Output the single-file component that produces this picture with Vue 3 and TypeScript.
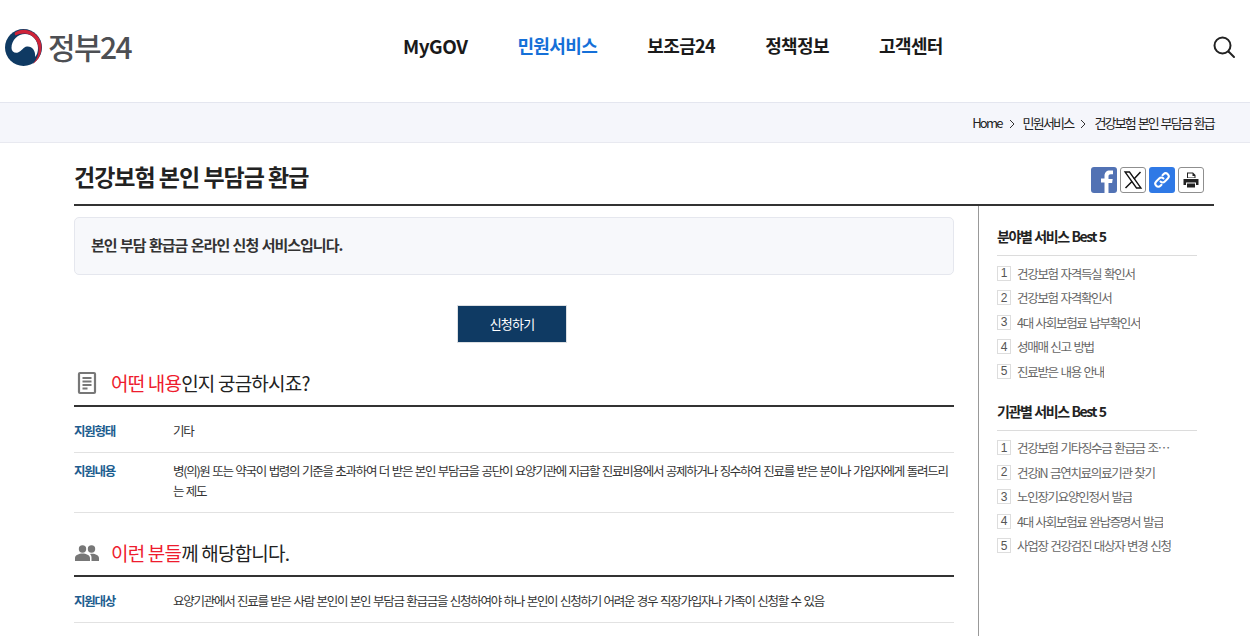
<script setup lang="ts">
const nav = [
  { label: 'MyGOV', active: false, latin: true },
  { label: '민원서비스', active: true, latin: false },
  { label: '보조금24', active: false, latin: false },
  { label: '정책정보', active: false, latin: false },
  { label: '고객센터', active: false, latin: false },
]
const field = ['건강보험 자격득실 확인서', '건강보험 자격확인서', '4대 사회보험료 납부확인서', '성매매 신고 방법', '진료받은 내용 안내']
const agency = ['건강보험 기타징수금 환급금 조회 신청', '건강iN 금연치료의료기관 찾기', '노인장기요양인정서 발급', '4대 사회보험료 완납증명서 발급', '사업장 건강검진 대상자 변경 신청']
</script>

<template>
  <div class="page">
    <header class="top">
      <div class="logo">
        <svg width="37" height="37" viewBox="0 0 37 37">
          <circle cx="18.500" cy="18.500" r="18.500" fill="#0f3a63" />
          <path d="M6.500 19C6.500 11 13 5 20 5c7 0 13 6 13 14 0 4-1 7-3 9 1-6-3-11-8-10.500-4 .5-5 4.500-9 6-3 1-6.500-.5-6.500-4.500Z" fill="#fff" />
          <path d="M10 3.500C14 1 18 .5 21 1c9 1 15.500 9 15.500 17 0 8-3.500 13-8.500 17 4-5 6-10 5.500-16C33 11 27 5 20 4.500c-4-.2-7 .5-9.500 2-.8-.8-1-2-.5-3Z" fill="#cf2338" />
        </svg>
        <span class="logo-text">정부24</span>
      </div>
      <nav class="nav">
        <a v-for="n in nav" :key="n.label" class="nav-item" :class="{ on: n.active, latin: n.latin }">{{ n.label }}</a>
      </nav>
      <svg class="search" width="24" height="24" viewBox="0 0 24 24" fill="none" stroke="#222" stroke-width="2">
        <circle cx="10.500" cy="10.500" r="8" />
        <path d="M16.500 16.500 22 22" stroke-linecap="round" />
      </svg>
    </header>

    <div class="crumbs">
      <span>Home</span>
      <svg class="chev" width="6" height="10" viewBox="0 0 6 10" fill="none" stroke="#333"><path d="M1 1l4 4-4 4" /></svg>
      <span>민원서비스</span>
      <svg class="chev" width="6" height="10" viewBox="0 0 6 10" fill="none" stroke="#333"><path d="M1 1l4 4-4 4" /></svg>
      <span>건강보험 본인 부담금 환급</span>
    </div>

    <div class="wrap">
      <div class="title-row">
        <h1>건강보험 본인 부담금 환급</h1>
        <div class="share">
          <span class="sq fb">
            <svg width="26" height="26" viewBox="0 0 26 26"><path d="M13.500 26V15.500h-3.500v-4h3.500V9c0-3.500 2-5.500 5.200-5.500h3.300v3.700h-2.300c-1.500 0-2.200.8-2.200 2.300v2.500h4.200l-.6 4h-3.600V26Z" fill="#fff" /></svg>
          </span>
          <span class="sq line">
            <svg width="22" height="22" viewBox="0 0 22 22" fill="none" stroke="#111"><path d="M3 3h4.500L19 19h-4.500Z" stroke-width="1.300" /><path d="M18.500 3 12 10M10 12.500 3.500 19" stroke-width="1.500" /></svg>
          </span>
          <span class="sq link">
            <svg width="20" height="20" viewBox="0 0 20 20" fill="none" stroke="#fff" stroke-width="2" stroke-linecap="round"><path d="M8.500 11.500a3 3 0 0 0 4.300 0l3-3a3 3 0 0 0-4.300-4.300l-1 1" /><path d="M11.500 8.500a3 3 0 0 0-4.300 0l-3 3a3 3 0 0 0 4.300 4.300l1-1" /></svg>
          </span>
          <span class="sq line">
            <svg width="18" height="18" viewBox="0 0 18 18"><path d="M5 1.500h6l2.500 2.500v3H5Z" fill="#222" /><path d="M6 2.500h4.500V5h2v1.500H6Z" fill="#fff" /><path d="M1.500 8h15v6h-2.500v-2.500H4V14H1.500Z" fill="#222" /><path d="M5 12.500h8v4H5Z" fill="#222" /></svg>
          </span>
        </div>
      </div>

      <div class="body">
        <main class="main">
          <div class="intro">본인 부담 환급금 온라인 신청 서비스입니다.</div>
          <div class="cta"><a class="apply">신청하기</a></div>

          <h2 class="sec">
            <svg class="sec-ico" width="20" height="24" viewBox="0 0 20 24" fill="none" stroke="#777"><rect x="2" y="2" width="16" height="20" rx="1" stroke-width="2.200" /><path d="M5.500 7h9M5.500 10.500h9M5.500 14h9M5.500 17.500h5" stroke-width="1.800" /></svg>
            <span><em>어떤 내용</em>인지 궁금하시죠?</span>
          </h2>
          <dl class="row first">
            <dt>지원형태</dt>
            <dd>기타</dd>
          </dl>
          <dl class="row">
            <dt>지원내용</dt>
            <dd>병(의)원 또는 약국이 법령의 기준을 초과하여 더 받은 본인 부담금을 공단이 요양기관에 지급할 진료비용에서 공제하거나 징수하여 진료를 받은 분이나 가입자에게 돌려드리는 제도</dd>
          </dl>

          <h2 class="sec second">
            <svg class="sec-ico" width="24" height="16" viewBox="0 0 24 16" fill="#777"><circle cx="7.500" cy="4" r="3.700" /><circle cx="16.500" cy="4" r="3.700" /><path d="M0 16v-3c0-3 4-4.500 7.500-4.500S15 10 15 13v3ZM16.500 16v-3.500c0-1.500-.6-2.700-1.500-3.600 4-.8 9 .8 9 4.100v3Z" /></svg>
            <span><em>이런 분들</em>께 해당합니다.</span>
          </h2>
          <dl class="row first">
            <dt>지원대상</dt>
            <dd>요양기관에서 진료를 받은 사람 본인이 본인 부담금 환급금을 신청하여야 하나 본인이 신청하기 어려운 경우 직장가입자나 가족이 신청할 수 있음</dd>
          </dl>
        </main>

        <aside class="side">
          <h3>분야별 서비스 Best 5</h3>
          <ol class="rank">
            <li v-for="(t, i) in field" :key="t"><b>{{ i + 1 }}</b><span>{{ t }}</span></li>
          </ol>
          <h3 class="h-next">기관별 서비스 Best 5</h3>
          <ol class="rank">
            <li v-for="(t, i) in agency" :key="t"><b>{{ i + 1 }}</b><span>{{ t }}</span></li>
          </ol>
        </aside>
      </div>
    </div>
  </div>
</template>

<style>
html, body { margin: 0; background: #fff; overflow: hidden; }
</style>

<style scoped>
.page { width: 1250px; height: 636px; overflow: hidden; font-family: "Noto Sans CJK KR", "Noto Sans", sans-serif; color: #1a1a1a; }
.top { height: 102px; display: flex; align-items: center; padding: 0 14px 8px 5px; box-sizing: border-box; }
.logo { display: flex; align-items: center; gap: 6px; width: 390px; }
.logo-text { font-size: 30px; font-weight: 500; color: #4d4f53; letter-spacing: -1.600px; line-height: 38px; position: relative; top: -1px; }
.nav { display: flex; gap: 50px; margin-left: 8px; flex: 1; position: relative; top: -2px; }
.nav-item { font-size: 18px; font-weight: 700; letter-spacing: -.6px; color: #1a1a1a; }
.nav-item.latin { font-size: 19px; letter-spacing: -.5px; }
.nav-item.on { color: #1570d8; }
.search { flex: none; }
.crumbs { height: 41px; background: #f5f6fb; border-top: 1px solid #e4e6ef; border-bottom: 1px solid #e8e9f0; display: flex; align-items: center; justify-content: flex-end; gap: 6px; padding-right: 36px; font-size: 13px; letter-spacing: -1.800px; word-spacing: 1.500px; color: #222; box-sizing: border-box; }
.chev { margin: 2px 2px 0 1px; }
.wrap { margin: 0 36px 0 74px; }
.title-row { height: 63px; display: flex; align-items: center; justify-content: space-between; border-bottom: 2px solid #333; box-sizing: border-box; padding: 10px 10px 0 0; }
h1 { font-size: 23px; font-weight: 700; margin: 0; letter-spacing: -1px; color: #222; position: relative; top: -3px; }
.share { display: flex; gap: 3px; margin-top: 2px; }
.sq { width: 26px; height: 26px; border-radius: 3px; display: flex; align-items: center; justify-content: center; box-sizing: border-box; overflow: hidden; }
.fb { background: #5272b4; }
.line { border: 1px solid #8f8f8f; background: #fff; }
.link { background: #2f79e6; }
.body { display: flex; }
.main { width: 880px; padding-top: 11px; }
.intro { height: 58px; border: 1px solid #e5e7ee; border-radius: 5px; background: #f7f8fb; box-sizing: border-box; padding: 0 16px 4px; display: flex; align-items: center; font-size: 15px; font-weight: 700; letter-spacing: -1px; word-spacing: 1px; color: #333; }
.cta { display: flex; justify-content: center; margin-top: 30px; padding-right: 4px; }
.apply { width: 108px; height: 34px; padding-bottom: 2px; background: #0f3a63; border: 1px solid #dcdfe2; box-sizing: content-box; display: flex; align-items: center; justify-content: center; font-size: 13px; color: #fff; letter-spacing: -.8px; }
.sec { height: 64px; margin: 0; border-bottom: 2px solid #333; box-sizing: border-box; display: flex; align-items: center; gap: 13px; font-size: 19px; font-weight: 400; letter-spacing: -.8px; color: #222; padding: 18px 0 0 3px; }
.sec em { font-style: normal; color: #ee1c2e; }
.sec-ico { flex: none; }
.sec > span { margin: 0 0 2px 1px; }
.sec.second { gap: 11px; padding-left: 1px; }
.row { margin: 0; display: flex; padding: 8px 0 11px; border-bottom: 1px solid #e2e2e2; font-size: 12.500px; line-height: 20px; letter-spacing: -1.270px; word-spacing: 1.100px; }
.row.first { padding-top: 14px; }
.row dt { width: 99px; flex: none; font-weight: 700; color: #1d5d8f; }
.row dd { margin: 0; color: #333; }
.side { margin-left: 24px; border-left: 1px solid #999; padding: 21px 17px 0 18px; width: 200px; height: 440px; flex: none; }
h3 { margin: 0; font-size: 14px; font-weight: 700; letter-spacing: -1.400px; word-spacing: 1px; color: #222; height: 28px; line-height: 18px; border-bottom: 1px solid #dcdcdc; }
.h-next { margin-top: 18px; }
.rank { list-style: none; margin: 5px 0 0; padding: 0; }
.rank li { height: 24.500px; display: flex; align-items: center; gap: 6px; font-size: 12.500px; letter-spacing: -1.300px; word-spacing: 1.200px; color: #666; }
.rank li span { white-space: nowrap; overflow: hidden; text-overflow: ellipsis; max-width: 155px; }
.rank b { width: 12px; height: 13px; flex: none; border: 1px solid #ddd; display: flex; align-items: center; justify-content: center; font-weight: 400; font-size: 12px; letter-spacing: 0; color: #555; font-family: "Liberation Sans", sans-serif; }
</style>
